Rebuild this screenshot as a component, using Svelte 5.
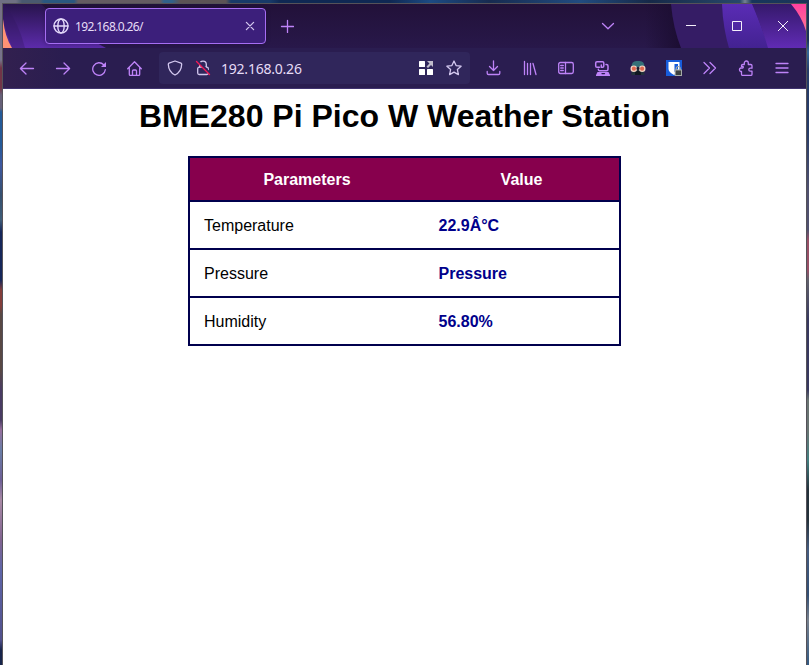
<script>
  const rows = [
    ['Temperature', '22.9Â°C'],
    ['Pressure', 'Pressure'],
    ['Humidity', '56.80%'],
  ];
</script>

<div class="desktop">
  <div class="window">
    <div class="tabstrip">
      <svg class="art" width="803" height="44" viewBox="3 4 803 44">
        <defs>
          <linearGradient id="base" x1="0" y1="0" x2="0" y2="1">
            <stop offset="0" stop-color="#221139" /><stop offset="1" stop-color="#28184a" />
          </linearGradient>
          <linearGradient id="glow" x1="0" y1="0" x2="0" y2="1">
            <stop offset="0" stop-color="#35196b" /><stop offset="1" stop-color="#602bb4" />
          </linearGradient>
          <linearGradient id="mid" x1="0" y1="0" x2="0" y2="1">
            <stop offset="0" stop-color="#5a2cb5" /><stop offset="1" stop-color="#432291" />
          </linearGradient>
          <linearGradient id="left" x1="0" y1="0" x2="0" y2="1">
            <stop offset="0" stop-color="#28144d" /><stop offset="1" stop-color="#5c2bab" />
          </linearGradient>
          <linearGradient id="shade" x1="0" y1="0" x2="1" y2="0">
            <stop offset="0" stop-color="#1b0d31" stop-opacity="0" /><stop offset="1" stop-color="#1b0d31" />
          </linearGradient>
          <linearGradient id="pink" x1="0" y1="0" x2="0" y2="1">
            <stop offset="0" stop-color="#ff409f" /><stop offset="1" stop-color="#ff7593" />
          </linearGradient>
        </defs>
        <path d="M3 4h803v44H3z" fill="url(#base)" />
        <path d="M3 4h38q20 20 65 44H3z" fill="url(#left)" />
        <path d="M3 4h2q14 20 20 44H12Q6 30 3 19z" fill="#32185f" opacity=".35" />
        <path d="M3 19q2 18 9 29H3z" fill="#ff9275" />
        <path d="M645 4h27q2 25 10 44h-37z" fill="url(#shade)" />
        <path d="M671 4h135v44H681q-8-20-10-44z" fill="#351c65" />
        <path d="M722 4h31l16 44h-40q-6-20-7-44z" fill="url(#mid)" />
        <path d="M752 4h54v44h-38q-5-18-16-44z" fill="url(#glow)" />
        <path d="M791 4h15v27Q802 17 791 4z" fill="url(#pink)" />
      </svg>
      <div class="tab">
        <svg width="16" height="16" viewBox="0 0 16 16" class="line pale globe">
          <circle cx="8" cy="8" r="7" /><ellipse cx="8" cy="8" rx="3.2" ry="7" /><path d="M1 8h14" />
        </svg>
        <span>192.168.0.26/</span>
        <svg width="10" height="10" viewBox="0 0 10 10" class="line pale close"><path d="M1.4 1.4l7.200 7.200M8.600 1.4L1.4 8.600" /></svg>
      </div>
      <svg class="line plus" width="14" height="14" viewBox="0 0 14 14"><path d="M7.500 1.500v12M1.500 7.500h12" /></svg>
      <svg class="line chevron" width="14" height="8" viewBox="0 0 14 8"><path d="M1.5 1.5L7 6.8l5.5-5.3" /></svg>
      <div class="controls">
        <svg width="12" height="12" viewBox="0 0 12 12"><path d="M1 5.5h10" /></svg>
        <svg width="12" height="12" viewBox="0 0 12 12"><path d="M1.5 1.5h9v9h-9z" /></svg>
        <svg width="12" height="12" viewBox="0 0 12 12"><path d="M1 1l10 10M11 1L1 11" /></svg>
      </div>
    </div>

    <div class="toolbar">
      <div class="cell"><svg class="line" width="16" height="16" viewBox="0 0 16 16"><path d="M14.500 8.500H1.600M7 3L1.400 8.500 7 14" /></svg></div>
      <div class="cell"><svg class="line" width="16" height="16" viewBox="0 0 16 16"><path d="M1.500 8.500h13M9 3l5.600 5.500L9 14" /></svg></div>
      <div class="cell"><svg class="line" width="16" height="16" viewBox="0 0 16 16"><path d="M14.300 9.700A6.300 6.300 0 1 1 12.700 4.800" /><path d="M15 2v5H10z" fill="currentColor" stroke="none" /></svg></div>
      <div class="cell"><svg class="line" width="16" height="16" viewBox="0 0 16 16"><path d="M.7 8.700l6.800-6.900 6.800 6.900M2.300 7.500v6.700q0 1.200 1 1.200h8.400q1 0 1-1.200V7.500M5.500 15v-4q0-1 1-1h2q1 0 1 1v4" /></svg></div>

      <div class="urlbar">
        <svg class="line pale" width="16" height="16" viewBox="0 0 16 16"><path d="M8 1l6 2.200q.7.3.7 1-.3 7.600-6.700 10.800Q1.600 11.800 1.300 4.200q0-.7.7-1z" /></svg>
        <svg class="line pale lock" width="16" height="16" viewBox="0 0 16 16"><path d="M4.700 7V4.500a3.300 3.300 0 0 1 6.600 0V7" /><rect x="2.700" y="7.200" width="10.600" height="7.300" rx="1.500" /><path d="M2.500.800l12.500 12.400" stroke="#30265f" stroke-width="2.400" /><path d="M1.500 1.500l13 13" stroke="#f51855" stroke-width="1.400" /></svg>
        <span>192.168.0.26</span>
        <svg class="grid" width="16" height="16" viewBox="0 0 16 16"><g fill="#fff"><rect x="1" y="1" width="6" height="6" rx=".5" /><rect x="1" y="9" width="6" height="6" rx=".5" /><rect x="9" y="9" width="6" height="6" rx=".5" /></g><path d="M9 1h6v6l-2-2-3 3-1.500-1.500 3-3z" fill="#c1bdcb" /></svg>
        <svg class="line pale star" width="16" height="16" viewBox="0 0 16 16"><path d="M8 1l2.100 4.600 5 .6-3.700 3.400 1 5L8 12.100l-4.400 2.500 1-5L.9 6.200l5-.6z" /></svg>
      </div>

      <div class="cell"><svg class="line" width="16" height="16" viewBox="0 0 16 16"><path d="M7.500.800v9.700M3.500 6.500l4 4 4-4M1.200 11.500v1.700q0 1.300 1.300 1.300h10q1.300 0 1.300-1.300v-1.700" /></svg></div>
      <div class="cell"><svg class="line" width="16" height="16" viewBox="0 0 16 16"><path d="M2.500 1.500v13M5.500 3.500v11M8.500 3.500v11M11 3.500l3 11" /></svg></div>
      <div class="cell"><svg class="line" width="16" height="16" viewBox="0 0 16 16"><rect x=".7" y="2.500" width="14.600" height="11" rx="1.700" /><path d="M7.500 2.500v11M2.700 5.500h2.600M2.700 8h2.600M2.700 10.500h2.600" /></svg></div>
      <div class="cell"><svg class="line" width="16" height="16" viewBox="0 0 16 16"><path d="M5.500 7.300H3q-1.300 0-1.300-1.300V3q0-1.300 1.300-1.300h5.500q1.300 0 1.300 1.300v3q0 1.300-1.300 1.300H7.300V5M12 4.500h.5q1.500 0 1.500 1.500v3.200q0 1.500-1.500 1.500H5.500q-1.200 0-1.200-1.400" stroke-width="1.500" /><path d="M3.500 12h11l1.500 3v1H2v-1z" fill="currentColor" stroke="none" /><path d="M8 13.600h2.500" stroke="#2a1d50" /></svg></div>
      <div class="cell"><svg width="16" height="16" viewBox="0 0 16 16"><path d="M1.500 7q0-6 5-6h3q5 0 5 6z" fill="#347078" /><path d="M2 9h12l.7 6H1.300z" fill="#24333d" /><path d="M5 11h6v4H5z" fill="#111821" /><circle cx="3.800" cy="8.700" r="3.300" fill="#f3d6c6" /><circle cx="12.200" cy="8.700" r="3.300" fill="#f3d6c6" /><circle cx="3.900" cy="8.700" r="2.100" fill="#de6850" /><circle cx="12.100" cy="8.700" r="2.100" fill="#de6850" /><path d="M6.500 7.500h3v2h-3z" fill="#201c28" /></svg></div>
      <div class="cell"><svg width="16" height="16" viewBox="0 0 16 16"><path d="M0 0h16v16H0z" fill="#175ddc" /><path d="M2.500 2h11v7q0 3-5.500 6-5.500-3-5.500-6z" fill="#fff" /><path d="M8.500 4h3.500v4.500q-.5 2-3.500 3.500z" fill="#175ddc" /><path d="M8.700 9.500H16V16H8.700z" fill="#a5aaa7" /><path d="M10.200 10V8.500a2 2 0 0 1 4 0V10" fill="none" stroke="#a5aaa7" stroke-width="1.200" /><path d="M9.700 10.500h5.300V15H9.700z" fill="#3c4141" /></svg></div>
      <div class="cell"><svg class="line" width="16" height="16" viewBox="0 0 16 16"><path d="M2 2.500L7.500 8 2 13.500M8 2.500L13.500 8 8 13.500" /></svg></div>
      <div class="cell"><svg class="line" width="16" height="16" viewBox="0 0 16 16"><path d="M6.300 4.500V3a2 2 0 0 1 4 0v1.500h2.500q1.200 0 1.200 1.200V8.200h-1.700a1.500 1.500 0 0 0 0 3H14v3q0 1.200-1.200 1.200H4.700q-1.200 0-1.200-1.200v-2.700H2.800a1.800 1.800 0 0 1 0-3.500h1.700q.8 0 .8-.8t-.8-.8h-1v-.9q0-1.200 1.200-1.200z" /></svg></div>
      <div class="cell"><svg class="line" width="16" height="16" viewBox="0 0 16 16"><path d="M2 3.500h12M2 8h12M2 12.500h12" /></svg></div>
    </div>

    <main>
      <h1>BME280 Pi Pico W Weather Station</h1>
      <div class="table">
        <div class="row head"><div>Parameters</div><div>Value</div></div>
        {#each rows as [name, value]}
          <div class="row"><div>{name}</div><div class="value">{value}</div></div>
        {/each}
      </div>
    </main>
  </div>
</div>

<style>
  :global(body) { margin: 0; overflow: hidden; }
  .desktop {
    box-sizing: border-box;
    width: 809px;
    height: 665px;
    padding: 3px 2px 0;
    background:
      linear-gradient(90deg, #6f7083 0 16px, #49596f 22px 40px, #2a5780 44px 74px, #655b62 78px 160px, #31618b 164px 172px, #5c5356 180px 226px, #183a69 231px 270px, #0f2853 280px 390px, #1c4b83 430px, #172b50 490px, #214c80 580px, #162948 650px, #27486a 740px, #748293 745px, #17365b 752px, #1b3558 809px) 0 0 / 100% 3px no-repeat,
      linear-gradient(#777084 0, #77738a 60px, #713447 68px 88px, #666078 95px 108px, #245a98 112px 145px, #3e58a0 165px, #35506f 195px, #3f5c78 220px, #15265a 232px 280px, #833e3b 290px 306px, #584844 314px 370px, #493b63 390px 420px, #966f9d 430px, #697da6 450px, #6d5f96 480px, #a889a5 500px, #816490 540px, #5e65a8 570px, #51508c 640px, #17244b 650px) 0 0 / 2px 100% no-repeat,
      linear-gradient(#19365c 0, #1b3259 40px, #34679a 52px, #263c69 70px 130px, #50516f 190px 230px, #974f66 240px 270px, #61616c 280px, #38395f 320px 390px, #697472 400px 430px, #437f80 460px, #24313b 490px 520px, #455c80 550px, #334f74 595px, #77818e 620px, #345981 665px) 807px 0 / 2px 100% no-repeat;
  }
  .window {
    box-sizing: border-box;
    height: 662px;
    border: 1px solid #555259;
    border-bottom: 0;
    background: #fff;
    font-family: "Noto Sans", "Open Sans", sans-serif;
    color: #c98fff;
  }
  svg { display: block; flex: none; }
  .line { fill: none; stroke: currentColor; stroke-width: 1.3; stroke-linecap: round; stroke-linejoin: round; color: #be83f8; }
  .pale { color: #d3c8ef; }
  .globe { color: #e3d9fa; stroke-width: 1.4; }
  .tabstrip { position: relative; display: flex; align-items: center; height: 44px; }
  .art { position: absolute; inset: 0; }
  .tabstrip > :not(.art) { position: relative; }
  .tab {
    box-sizing: border-box;
    display: flex;
    align-items: center;
    width: 221px;
    height: 36px;
    margin-left: 42px;
    padding: 0 10px 0 7px;
    border: 1px solid #a66ef3;
    border-radius: 4px;
    background: #3c1f7b;
    box-shadow: 0 0 4px #1a0a3266;
  }
  .tab span { margin-left: 6px; padding-top: 1px; font-size: 12px; line-height: 18px; letter-spacing: -.61px; color: #e6dcf6; }
  .close { margin-left: auto; }
  .plus { margin-left: 14px; }
  .chevron { margin-left: auto; margin-right: 21px; }
  .controls { display: flex; gap: 34px; padding: 0 17px 0 49px; }
  .controls svg { fill: none; stroke: #f4effb; stroke-width: 1; }
  .toolbar {
    box-sizing: border-box;
    display: flex;
    align-items: center;
    height: 41px;
    padding: 0 6px;
    border-bottom: 1px solid #40336f;
    background: linear-gradient(90deg, #32204f 0, #2a1d50 60px);
  }
  .cell { display: flex; align-items: center; justify-content: center; width: 36px; height: 40px; }
  .urlbar {
    box-sizing: border-box;
    display: flex;
    align-items: center;
    width: 311px;
    height: 32px;
    margin: 0 6px;
    padding: 0 8px;
    border-radius: 4px;
    background: #30265b;
  }
  .lock { margin-left: 12px; }
  .urlbar span { margin-left: 10px; padding-top: 2px; font-size: 14px; line-height: 20px; letter-spacing: -.22px; color: #e6dcf6; }
  .grid { margin-left: auto; }
  .star { margin-left: 12px; }
  main { display: flex; flex-direction: column; align-items: center; padding-top: 9px; font-family: "Liberation Sans", Arial, sans-serif; color: #000; }
  h1 { margin: 0; font-size: 32px; line-height: 37px; font-weight: 700; white-space: nowrap; }
  .table { box-sizing: border-box; width: 433px; margin-top: 21px; border: 2px solid #00004d; font-size: 16px; line-height: 18px; }
  .row { display: grid; grid-template-columns: 234px 195px; align-items: center; height: 46px; border-bottom: 2px solid #00004d; }
  .row:last-child { border-bottom: 0; }
  .row > div { padding: 2px 14px 0; }
  .head { height: 42px; background: #87004d; color: #fff; font-weight: 700; text-align: center; }
  .row > .value { padding-left: 14.5px; color: #00008b; font-weight: 700; }
</style>
